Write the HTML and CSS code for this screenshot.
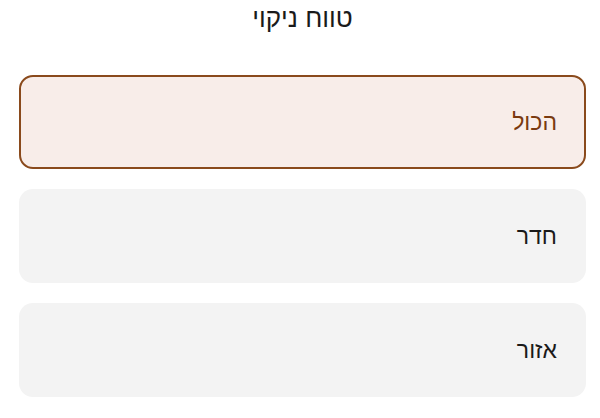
FILE: index.html
```html
<!DOCTYPE html>
<html lang="he" dir="rtl">
<head>
<meta charset="utf-8">
<link rel="stylesheet" href="styles.css">
</head>
<body>
<div class="page">
  <h1 class="title">טווח ניקוי</h1>
  <div class="options">
    <div class="option selected">הכול</div>
    <div class="option">חדר</div>
    <div class="option">אזור</div>
  </div>
</div>
</body>
</html>
```
FILE: styles.css
```css
html, body {
  margin: 0;
  padding: 0;
  background: #ffffff;
}
body {
  font-family: "Liberation Sans", "DejaVu Sans", sans-serif;
  color: #1a1a1a;
}
.page {
  padding: 0 14px 0 19px;
}
.title {
  margin: 0;
  height: 36px;
  line-height: 36px;
  font-size: 26px;
  font-weight: normal;
  text-align: center;
}
.options {
  display: flex;
  flex-direction: column;
  gap: 20px;
  margin-top: 39px;
}
.option {
  box-sizing: border-box;
  height: 94px;
  border-radius: 14px;
  background: #f3f3f3;
  border: 2px solid transparent;
  display: flex;
  align-items: center;
  padding: 0 27px;
  font-size: 23px;
}
.option.selected {
  background: #f8ede9;
  border-color: #8a4a1c;
  color: #7a3a10;
}
```
